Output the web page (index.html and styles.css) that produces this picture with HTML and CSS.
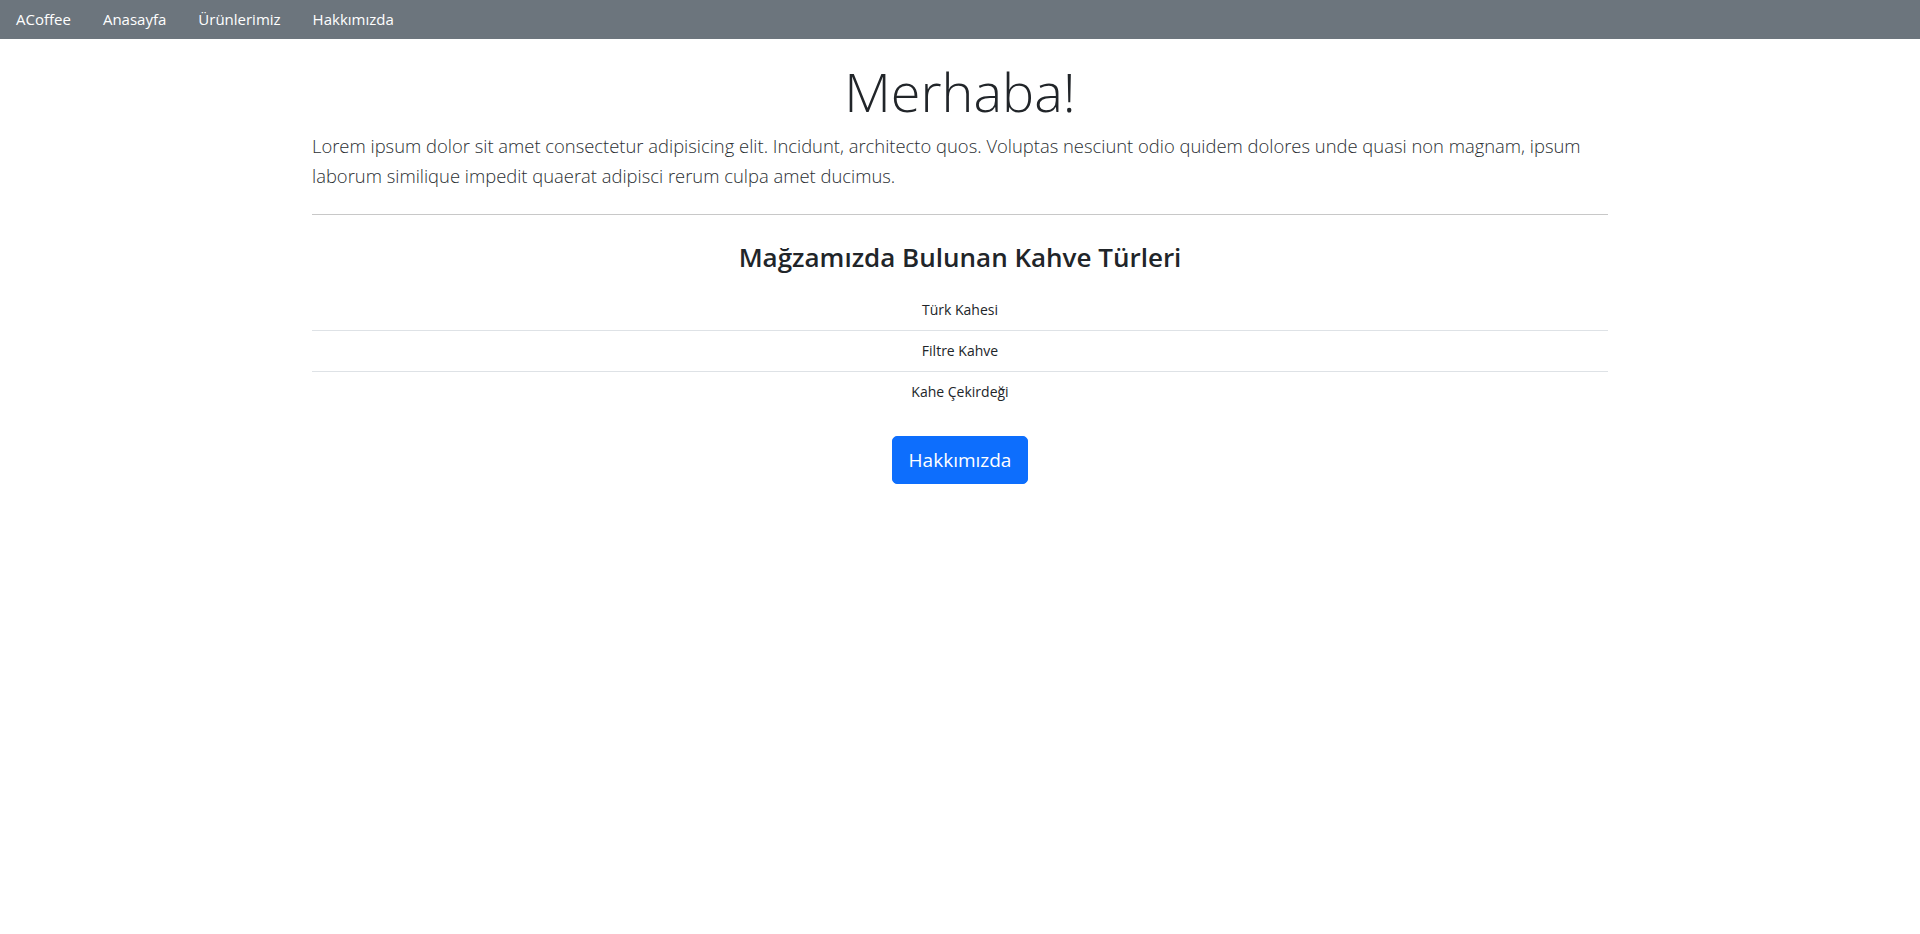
FILE: index.html
```html
<!DOCTYPE html>
<html lang="tr">
<head>
<meta charset="utf-8">
<title>ACoffee</title>
<link rel="stylesheet" href="styles.css">
</head>
<body>
<nav class="navbar">
  <a class="brand" href="#">ACoffee</a>
  <ul class="nav">
    <li><a href="#">Anasayfa</a></li>
    <li><a href="#">Ürünlerimiz</a></li>
    <li><a href="#">Hakkımızda</a></li>
  </ul>
</nav>
<main class="container">
  <h1 class="display">Merhaba!</h1>
  <p class="lead">Lorem ipsum dolor sit amet consectetur adipisicing elit. Incidunt, architecto quos. Voluptas nesciunt odio quidem dolores unde quasi non magnam, ipsum laborum similique impedit quaerat adipisci rerum culpa amet ducimus.</p>
  <hr class="rule">
  <h3 class="section-title">Mağzamızda Bulunan Kahve Türleri</h3>
  <ul class="list">
    <li class="list-item">Türk Kahesi</li>
    <li class="list-item">Filtre Kahve</li>
    <li class="list-item">Kahe Çekirdeği</li>
  </ul>
  <div class="actions">
    <a class="btn" href="#">Hakkımızda</a>
  </div>
</main>
</body>
</html>
```
FILE: styles.css
```css
* { box-sizing: border-box; }
html, body { margin: 0; padding: 0; }
body {
  font-family: "Open Sans", "Noto Sans", "Liberation Sans", sans-serif;
  font-size: 16px;
  line-height: 1.5;
  color: #212529;
  background: #fff;
}
a { text-decoration: none; }

.navbar {
  background: #6c757d;
  height: 39px;
  display: flex;
  align-items: center;
  padding: 0 16px;
  font-size: 15px;
}
.brand { color: #fff; margin-right: 24px; }
.nav { list-style: none; margin: 0; padding: 0; display: flex; }
.nav a { color: #fff; display: block; padding: 0 8px; margin-right: 16px; }

.container {
  width: 1296px;
  margin: 0 auto;
  padding-top: 20px;
  text-align: center;
}
.display {
  font-size: 54px;
  font-weight: 300;
  line-height: 1.2;
  margin: 0 0 7px;
}
.lead {
  font-size: 18.4px;
  font-weight: 300;
  line-height: 30px;
  text-align: left;
  color: #2b2f33;
  margin: 0;
}
.rule {
  border: 0;
  border-top: 1px solid #c8c8c8;
  margin: 23px 0 27px;
}
.section-title {
  font-size: 26px;
  font-weight: 600;
  line-height: 1.2;
  margin: 0 0 17px;
}
.list { list-style: none; margin: 0; padding: 0; }
.list-item {
  font-size: 14px;
  padding: 8px 16px;
  line-height: 24px;
  border-bottom: 1px solid #dee2e6;
}
.list-item:last-child { border-bottom: 0; }
.actions { margin-top: 24px; }
.btn {
  display: inline-block;
  background: #0d6efd;
  color: #fff;
  font-size: 19px;
  line-height: 30px;
  padding: 8px 16px;
  border: 1px solid #0d6efd;
  border-radius: 5px;
}
```
